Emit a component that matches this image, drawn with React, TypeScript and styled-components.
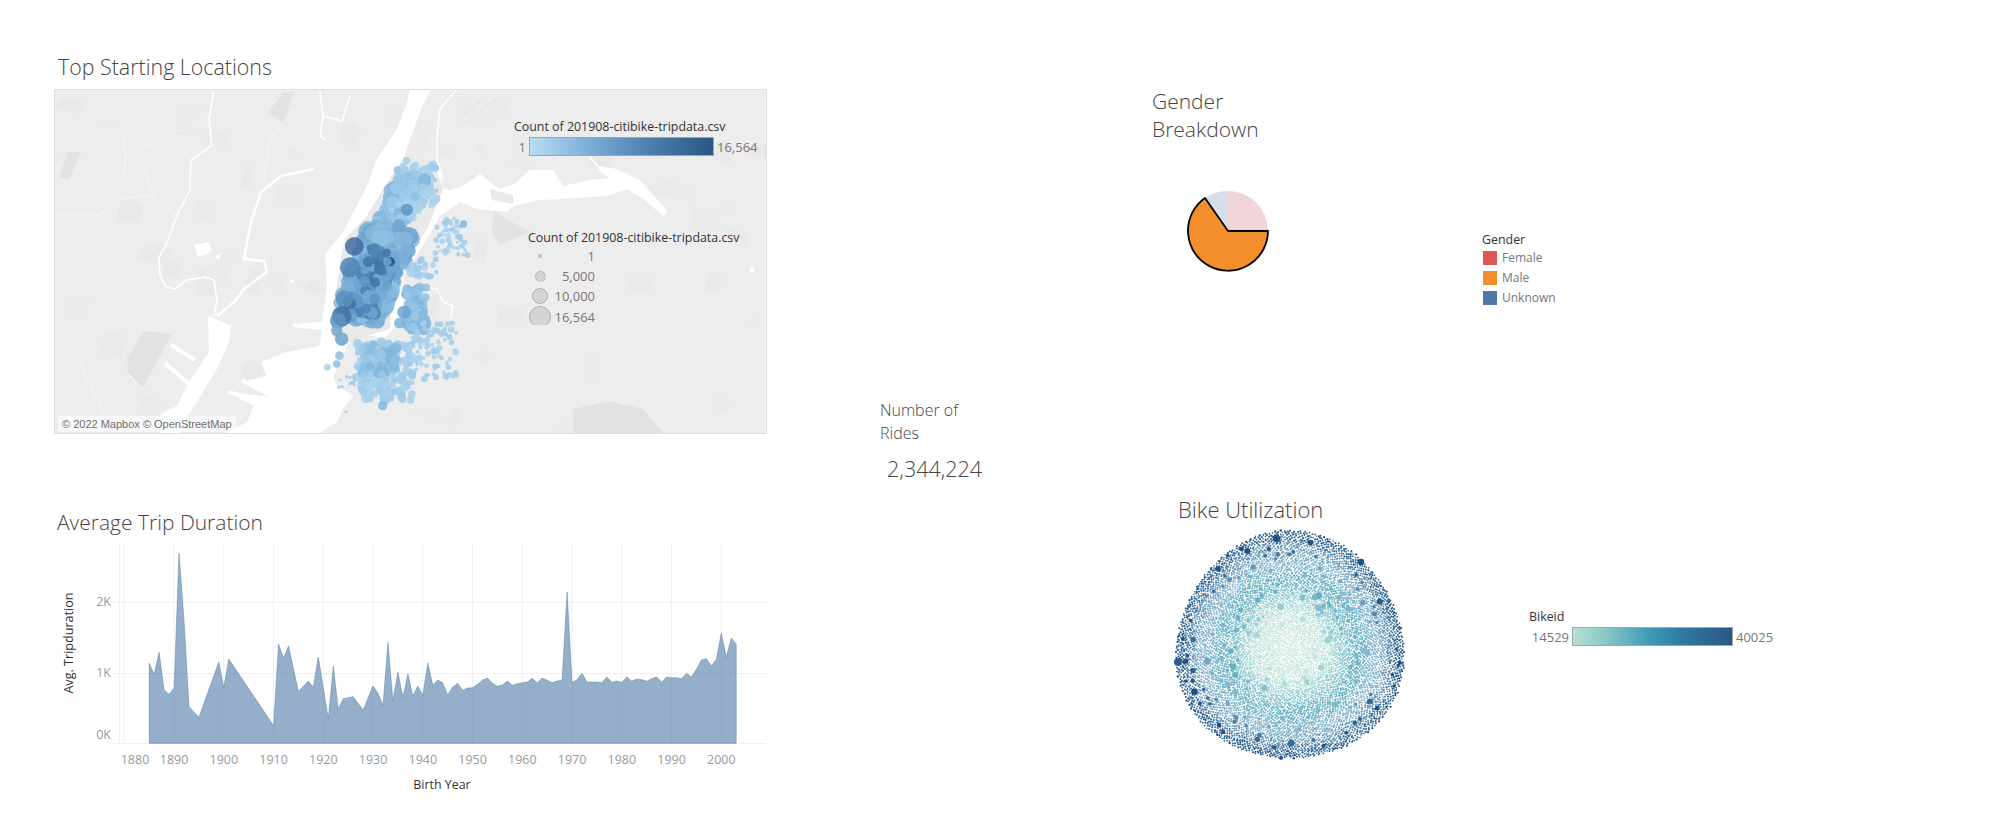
import React from 'react';
import styled, {createGlobalStyle} from 'styled-components';

const GlobalStyle = createGlobalStyle`
  html, body { margin: 0; padding: 0; background: white; }
  body { font-family: "Open Sans", "Liberation Sans", sans-serif; }
`;

const Page = styled.div`
  width: 2006px; height: 823px; display: flex; padding-left: 54px;
  box-sizing: border-box; overflow: hidden; background: white;
`;
const LeftColumn = styled.div`
  width: 713px; flex: none; padding-top: 56px;
`;
const MiddleColumn = styled.div`
  width: 272px; flex: none; margin-left: 113px; padding-top: 399px;
`;
const RightColumn = styled.div`
  flex: 1; padding-top: 87px;
`;
const Title = styled.h2<{$indent?: number; $size?: number}>`
  margin: 0 0 0 ${p => p.$indent ?? 0}px;
  font-size: ${p => p.$size ?? 21}px; line-height: 22px; font-weight: 300; color: #444;
  white-space: nowrap;
`;
const MapTitle = styled(Title)`
  margin-bottom: 11px;
`;
const TripTitle = styled(Title)`
  margin-top: 77px;
`;
const MapBox = styled.div`
  position: relative; width: 713px; height: 345px; box-sizing: border-box;
  border: 1px solid #dedede; background: #ededed; overflow: hidden;
  svg { display: block; }
`;
const Attribution = styled.div`
  position: absolute; left: 3px; bottom: 1px; height: 16px; padding: 0 4px;
  font: 11px/16px "Liberation Sans", Arial, sans-serif; color: #707070;
  background: rgba(255, 255, 255, .55); white-space: nowrap;
`;
const LegendTitle = styled.div`
  font-size: 12.4px; line-height: 16px; font-weight: 400; color: #333; white-space: nowrap;
`;
const LegendValue = styled.span<{$size?: number}>`
  font-size: ${p => p.$size ?? 13}px; line-height: 18px; color: #777; white-space: nowrap;
`;
const ColorLegend = styled.div`
  position: absolute; left: 459px; top: 29px;
`;
const RampRow = styled.div<{$label: number}>`
  display: grid; grid-template-columns: ${p => p.$label}px auto auto; column-gap: 3px;
  align-items: center; margin-top: 2px; text-align: right;
`;
const RampBar = styled.div<{$w: number; $ramp: string}>`
  width: ${p => p.$w}px; height: 19px; box-sizing: border-box;
  border: 1px solid #a8a59c; background: linear-gradient(to right, ${p => p.$ramp});
`;
const SizeLegend = styled.div`
  position: absolute; left: 473px; top: 140px;
`;
const SizeRow = styled.div`
  display: grid; grid-template-columns: 24px 43px; height: 20px; align-items: center;
  justify-items: center; text-align: right;
  span:last-child { justify-self: end; }
`;
const SizeDot = styled.i<{$r: number; $cut?: number}>`
  display: block; width: ${p => p.$r * 2}px; height: ${p => p.$r * 2}px; border-radius: 50%;
  box-sizing: border-box; background: #d4d4d4; border: 1.5px solid #b0b0b0;
  clip-path: inset(0 0 ${p => p.$cut ?? 0}px 0);
`;
const ChartWrap = styled.div`
  svg { display: block; }
  text { font-family: "Open Sans", sans-serif; }
`;
const RidesTitle = styled.div`
  font-size: 16px; line-height: 23px; font-weight: 300; color: #444;
`;
const RidesValue = styled.div`
  margin: 10px 0 0 7px; font-size: 21.5px; line-height: 28px; font-weight: 300; color: #444;
`;
const GenderSection = styled.section`
  display: flex; height: 218px;
`;
const GenderBlock = styled.div`
  width: 330px; flex: none;
  svg { display: block; margin: 46px 0 0 34px; }
`;
const GenderTitle = styled.h2`
  margin: 0; font-size: 21px; line-height: 28px; font-weight: 300; color: #444;
`;
const GenderLegend = styled.div`
  margin-top: 145px;
`;
const GenderRow = styled.div`
  display: flex; align-items: center; gap: 5px; height: 20px; margin-left: 1px;
`;
const Swatch = styled.i<{$color: string}>`
  display: block; width: 14px; height: 14px; background: ${p => p.$color};
`;
const BikeSection = styled.section`
  margin: 193px 0 0 26px;
`;
const BikeRow = styled.div`
  display: flex; margin: 7px 0 0 -8px;
  svg { display: block; flex: none; }
`;
const BikeLegend = styled.div`
  margin: 82px 0 0 119px;
`;

// small seeded random so the bubbles stay put between runs
function makeRng(seed: number) {
    let s = seed;
    return () => {
        s = (s * 16807) % 2147483647;
        return (s - 1) / 2147483646;
    };
}

type Bubble = { x: number, y: number, r: number, c: string };

// coords below are in the zoomed crop units: page = 300 + x/3, 89 + y/3
const z = (x: number, y: number, r: number, c: string): Bubble => ({x: 300 + x / 3, y: 89 + y / 3, r: r / 3, c});

function scatterLine(rng: () => number, n: number, a: number[], b: number[], w: number, rMin: number, rMax: number, cols: string[]) {
    const out: Bubble[] = [];
    for (let i = 0; i < n; i++) {
        const t = rng();
        const s = (rng() * 2 - 1) * w;
        const x = a[0] + (b[0] - a[0]) * t + s;
        const y = a[1] + (b[1] - a[1]) * t + s * .3;
        out.push(z(x, y, rMin + (rMax - rMin) * rng(), cols[Math.floor(rng() * cols.length)]));
    }
    return out;
}

function scatterBox(rng: () => number, n: number, x0: number, y0: number, x1: number, y1: number, rMin: number, rMax: number, cols: string[]) {
    const out: Bubble[] = [];
    for (let i = 0; i < n; i++) {
        out.push(z(x0 + (x1 - x0) * rng(), y0 + (y1 - y0) * rng(), rMin + (rMax - rMin) * rng(), cols[Math.floor(rng() * cols.length)]));
    }
    return out;
}

const LIGHT = ['#a9d2ec', '#9fcbe9', '#a4cfeb'];
const SOFT = ['#8fc0e3', '#9ac8e7', '#84b7dd'];
const MID = ['#7bafd7', '#86b8dc', '#6fa5d0', '#8fc0e3'];
const DEEP = ['#5d94c3', '#6fa5d0', '#4a80b3', '#78acd5', '#3f74a8'];

function buildBubbles() {
    const rng = makeRng(4242);
    return [
        ...scatterBox(rng, 34, 490, 18, 620, 72, 2, 2.5, ['#cfe4f2']),
        ...scatterBox(rng, 60, 310, 225, 420, 350, 6, 13, LIGHT),
        ...scatterLine(rng, 90, [265, 420], [335, 255], 42, 12, 22, SOFT),
        ...scatterLine(rng, 40, [300, 380], [370, 290], 35, 8, 16, LIGHT),
        ...scatterBox(rng, 60, 405, 385, 505, 500, 4, 9, LIGHT),
        ...scatterBox(rng, 36, 318, 510, 410, 568, 6, 11, LIGHT),
        ...scatterBox(rng, 70, 318, 595, 380, 725, 10, 17, SOFT),
        ...scatterBox(rng, 190, 170, 760, 340, 935, 7, 14, LIGHT),
        ...scatterBox(rng, 60, 185, 760, 290, 860, 9, 16, SOFT),
        ...scatterBox(rng, 90, 340, 700, 470, 870, 5, 10, LIGHT),
        ...scatterBox(rng, 16, 115, 860, 165, 900, 3, 6, LIGHT),
        ...scatterLine(rng, 340, [170, 690], [275, 420], 66, 14, 28, MID),
        ...scatterLine(rng, 110, [185, 670], [250, 480], 42, 12, 24, DEEP),
        z(163, 472, 28, '#3f6f9f'), z(150, 535, 30, '#4e84b4'), z(133, 630, 26, '#5a8fbd'),
        z(150, 680, 22, '#6b9ec9'), z(145, 590, 17, '#7fb0d6'), z(125, 682, 30, '#3f72a3'),
        z(114, 696, 24, '#5d94c0'), z(110, 724, 17, '#74a6cf'), z(125, 750, 20, '#6fa2cd'),
        z(321, 362, 18, '#5b95c4'), z(297, 410, 20, '#6fa5d0'), z(270, 518, 14, '#1f4e7f'),
        z(262, 518, 13, '#6fa5d0'), z(312, 670, 20, '#6fa5d0'), z(298, 702, 16, '#7bafd7'),
        z(248, 950, 14, '#84b8dd'), z(118, 800, 13, '#8fc0e3'), z(110, 825, 11, '#8fc0e3'),
        z(82, 835, 10, '#a4cfeb'), z(138, 968, 5, '#a9d2ec'), z(491, 405, 11, '#84b7dd'),
        z(205, 518, 16, '#3f74a8'), z(225, 580, 15, '#3f74a8'), z(198, 660, 15, '#4f86b8'),
        z(345, 322, 14, '#8fc0e3'), z(320, 215, 11, '#a4cfeb'),
    ];
}

const BUBBLES = buildBubbles();

// land patches a bit darker than the base land colour
function buildPatches() {
    const rng = makeRng(99);
    const out: { d: string, c: string }[] = [];
    for (let i = 0; i < 70; i++) {
        const x = 60 + rng() * 700;
        const y = 92 + rng() * 335;
        const w = 6 + rng() * 22;
        const h = 6 + rng() * 20;
        const sk = rng() * 8;
        out.push({
            d: `M${x} ${y}L${x + w * .6} ${y - sk * .4}L${x + w} ${y + sk}L${x + w - sk} ${y + h}L${x - sk} ${y + h - sk}Z`,
            c: i % 3 === 0 ? '#e9e9e9' : '#ebebeb'
        });
    }
    return out;
}

const PATCHES = buildPatches();

const WATER = 'M410 89L407 102L397 129L377 159L367 186L343 232L325 254L327 286L322 322L300 323L300 328L322 328L320 345L314 347L287 352L261 362L267 376L241 382L274 397L227 392L254 406L247 422L225 433L320 433L337 422L343 409L353 396L337 386L333 376L352 336L360 334L385 338L392 330L400 322L405 300L403 274L423 246L440 216L460 202L477 209L507 212L513 206L540 200L563 199L607 196L627 189L645 200L663 216L668 212L640 180L617 169L597 166L600 172L610 178L590 180L563 186L553 170L530 170L516 183L500 189L480 174L463 186L450 190L443 189L440 172L433 161L407 157L403 159L420 112L431 89Z';
const MANHATTAN = 'M407 157L433 161L443 189L427 229L400 269L392 296L390 329L355 339L342 347L332 336L333 316L340 262L345 239L367 216L383 189L403 159Z';
const BAY = 'M208 316L231 326L229 342L217 369L197 402L184 422L180 433L160 433L161 414L177 406L189 382L209 352Z';

const RIVERS = [
    'M214 91L209 118L211 140L212 145L199 155L191 160L190 185L190 190L177 215L177 216L166 245L159 257L160 275L166 287L175 289L187 280L205 277L214 280L217 300L214 316',
    'M217 316L234 302L244 289L267 272L264 261L244 259L251 222L261 192L281 176L314 169',
    'M320 92L323 116L342 121L350 96',
    'M323 116L320 136L325 139',
    'M457 89L440 109L437 139L437 159L443 179',
    'M423 286L437 289L443 302L453 306L450 319',
    'M597 166L585 150L570 140',
];
const THIN = [
    'M58 215L100 215L118 195L122 200L140 195L155 197L176 216',
    'M155 197L140 160L124 175L126 155L122 130L150 146L165 135L185 130L197 135',
    'M56 340L70 355L80 362L92 390L100 405L104 420',
    'M300 105L285 120L270 140L266 165L264 180L278 195',
];
const PIERS = [
    'M171 345L195 360', 'M165 363L190 385', 'M228 392L274 405', 'M242 380L275 398',
    'M293 325L322 328',
];

const GRADE_YEARS: [number, number][] = [
    [1885, 400], [1886, 433], [1887, 367], [1888, 480], [1889, 493], [1890, 474], [1891, 69], [1892, 270], [1893, 530],
    [1895, 562], [1899, 396], [1900, 472], [1901, 387], [1910, 587], [1911, 342], [1912, 385], [1913, 348], [1915, 484],
    [1917, 453], [1918, 472], [1919, 381], [1921, 566], [1922, 408], [1923, 536], [1924, 506], [1926, 500], [1928, 540],
    [1930, 468], [1931, 490], [1932, 526], [1933, 337], [1934, 512], [1935, 426], [1936, 502], [1937, 432], [1938, 498],
    [1939, 468], [1940, 496], [1941, 399], [1942, 466], [1943, 450], [1944, 458], [1945, 495], [1946, 472], [1947, 460],
    [1948, 481], [1949, 474], [1950, 473], [1951, 463], [1952, 450], [1953, 444], [1954, 460], [1955, 469], [1956, 465],
    [1957, 453], [1958, 466], [1959, 461], [1960, 458], [1961, 456], [1962, 445], [1963, 459], [1964, 444], [1965, 451],
    [1966, 458], [1967, 453], [1968, 450], [1969, 186], [1970, 457], [1971, 449], [1972, 430], [1973, 456], [1974, 456],
    [1975, 456], [1976, 458], [1977, 441], [1978, 457], [1979, 453], [1980, 457], [1981, 441], [1982, 454], [1983, 447],
    [1984, 449], [1985, 454], [1986, 446], [1987, 441], [1988, 456], [1989, 441], [1990, 443], [1991, 443], [1992, 446],
    [1993, 430], [1994, 441], [1995, 418], [1996, 390], [1997, 386], [1998, 408], [1999, 388], [2000, 310], [2001, 382],
    [2002, 325], [2003, 342],
];
const yearX = (y: number) => 124.3 + 4.975 * (y - 1880);
const zoomY = (p: number) => 530 + p / 3;
const AREA = `M${yearX(1885)} 743L` + GRADE_YEARS.map(([y, v]) => `${yearX(y).toFixed(1)} ${zoomY(v).toFixed(1)}`).join('L') + `L${yearX(2003)} 743Z`;
const DECADES = [1880, 1890, 1900, 1910, 1920, 1930, 1940, 1950, 1960, 1970, 1980, 1990, 2000];

function mix(a: number[], b: number[], t: number) {
    return `rgb(${a.map((v, i) => Math.round(v + (b[i] - v) * t)).join(',')})`;
}
const STOPS: [number, number[]][] = [
    [0, [214, 236, 229]], [.3, [200, 230, 222]], [.45, [150, 205, 210]], [.6, [100, 175, 195]],
    [.75, [140, 185, 208]], [.85, [105, 155, 188]], [.93, [55, 110, 155]], [1, [30, 80, 130]],
];
function rampColor(t: number) {
    for (let i = 1; i < STOPS.length; i++) {
        if (t <= STOPS[i][0]) {
            const [t0, c0] = STOPS[i - 1];
            const [t1, c1] = STOPS[i];
            return mix(c0, c1, (t - t0) / (t1 - t0));
        }
    }
    return mix(STOPS[7][1], STOPS[7][1], 0);
}

// sunflower spiral, then a few larger bubbles thrown in
function buildBikeDots() {
    const rng = makeRng(777);
    const dots: { x: number, y: number, r: number, c: string }[] = [];
    const N = 7000;
    for (let i = 0; i < N; i++) {
        const t = Math.sqrt((i + .5) / N);
        const a = i * 2.39996;
        const edge = 1 + .025 * Math.sin(a * 3) * t;
        const R = 114 * t * edge;
        dots.push({
            x: 120 + R * Math.cos(a) + (rng() - .5) * 1.2,
            y: 120 + R * Math.sin(a) + (rng() - .5) * 1.2,
            r: .95 + rng() * .45 - t * .2,
            c: rampColor(Math.min(1, t + (rng() - .5) * .08)),
        });
    }
    for (let i = 0; i < 170; i++) {
        const t = Math.sqrt(.03 + rng() * .95);
        const a = rng() * Math.PI * 2;
        dots.push({
            x: 120 + 113 * t * Math.cos(a),
            y: 120 + 113 * t * Math.sin(a),
            r: 1.6 + rng() * rng() * 2.2,
            c: rampColor(Math.min(1, t + .08)),
        });
    }
    dots.push({x: 8, y: 135, r: 4, c: '#2a5f92'});
    return dots;
}
const BIKE_DOTS = buildBikeDots();

function PieSlice() {
    const cx = 42, cy = 42, r = 40;
    const end = {x: 42 - 23, y: 42 - 33};
    return (
        <svg width="84" height="84" viewBox="0 0 84 84">
            <path d={`M${cx} ${cy}L${cx} ${cy - r}A${r} ${r} 0 0 1 ${cx + r} ${cy}Z`} fill="#f1d5d8"/>
            <path d={`M${cx} ${cy}L${end.x} ${end.y}A${r} ${r} 0 0 1 ${cx} ${cy - r}Z`} fill="#d6dfe8"/>
            <path d={`M${cx} ${cy}L${cx + r} ${cy}A${r} ${r} 0 1 1 ${end.x} ${end.y}Z`} fill="#f28e2b" stroke="#000" strokeWidth="1.8" strokeLinejoin="round"/>
        </svg>
    );
}

function App() {
    return (
        <Page>
            <GlobalStyle/>
            <LeftColumn>
                <MapTitle $indent={4} $size={21.4}>Top Starting Locations</MapTitle>
                <MapBox>
                    <svg width="711" height="343" viewBox="55 90 711 343">
                        <rect x="55" y="90" width="711" height="343" fill="#ededed"/>
                        {PATCHES.map((p, i) => <path key={i} d={p.d} fill={p.c}/>)}
                        <path d="M144 331L172 334L142 389L127 372L129 356Z" fill="#e2e2e2"/>
                        <path d="M127 372L142 389" stroke="white" strokeWidth="1" fill="none"/>
                        <path d="M68 152L81 152L69 179L59 177Z" fill="#e3e3e3"/>
                        <path d="M284 92L294 91L284 124L268 112Z" fill="#e3e3e3"/>
                        <path d="M573 409L610 401L643 409L663 433L573 433Z" fill="#e2e2e2"/>
                        <path d="M494 210L512 222L530 232L500 245L492 232Z" fill="#e3e3e3"/>
                        <path d={WATER} fill="white"/>
                        <path d={BAY} fill="white"/>
                        <path d={MANHATTAN} fill="#e9e9e9"/>
                        <path d="M490 189L513 195L513 204L492 200Z" fill="#e9e9e9"/>
                        {RIVERS.map((d, i) => <path key={i} d={d} fill="none" stroke="white" strokeWidth={i === 0 ? 1.6 : i === 1 ? 2.4 : 1.5} strokeLinejoin="round"/>)}
                        {THIN.map((d, i) => <path key={i} d={d} fill="none" stroke="#f6f6f6" strokeWidth="1"/>)}
                        {PIERS.map((d, i) => <path key={i} d={d} fill="none" stroke="white" strokeWidth="4"/>)}
                        <path d="M194 245L208 242L212 250L205 255L198 256Z" fill="white"/>
                        <path d="M215 256L222 253L218 260Z" fill="white"/>
                        <path d="M290 280L294 279L294 283L290 283Z" fill="white"/>
                        <path d="M750 268L754 268L754 272L750 272Z" fill="white"/>
                        {BUBBLES.map((b, i) => <circle key={i} cx={b.x} cy={b.y} r={b.r} fill={b.c} fillOpacity=".85"/>)}
                    </svg>
                    <ColorLegend>
                        <LegendTitle>Count of 201908-citibike-tripdata.csv</LegendTitle>
                        <RampRow $label={12}>
                            <LegendValue>1</LegendValue>
                            <RampBar $w={185} $ramp="#b9ddf1, #7fb2da 30%, #4d7fae 65%, #2a5783"/>
                            <LegendValue>16,564</LegendValue>
                        </RampRow>
                    </ColorLegend>
                    <SizeLegend>
                        <LegendTitle>Count of 201908-citibike-tripdata.csv</LegendTitle>
                        <SizeRow><SizeDot $r={2}/><LegendValue>1</LegendValue></SizeRow>
                        <SizeRow><SizeDot $r={5.5}/><LegendValue>5,000</LegendValue></SizeRow>
                        <SizeRow><SizeDot $r={8}/><LegendValue>10,000</LegendValue></SizeRow>
                        <SizeRow><SizeDot $r={11} $cut={3}/><LegendValue>16,564</LegendValue></SizeRow>
                    </SizeLegend>
                    <Attribution>© 2022 Mapbox © OpenStreetMap</Attribution>
                </MapBox>
                <TripTitle $indent={3}>Average Trip Duration</TripTitle>
                <ChartWrap>
                    <svg width="713" height="267" viewBox="54 533 713 267">
                        {DECADES.map(y => <line key={y} x1={yearX(y)} x2={yearX(y)} y1="544" y2="745" stroke="#f0f0f0"/>)}
                        <line x1="119.5" x2="119.5" y1="544" y2="745" stroke="#f0f0f0"/>
                        <line x1="113" x2="766" y1="602" y2="602" stroke="#f0f0f0"/>
                        <line x1="113" x2="766" y1="673.5" y2="673.5" stroke="#f0f0f0"/>
                        <line x1="113" x2="766" y1="743.5" y2="743.5" stroke="#f0f0f0"/>
                        <path d={AREA} fill="#4e79a7" fillOpacity=".6" stroke="#4e79a7" strokeOpacity=".45" strokeWidth="1"/>
                        <line x1={yearX(1885)} x2={yearX(2003)} y1="743" y2="743" stroke="#7a9bc2"/>
                        {[['2K', 602], ['1K', 673], ['0K', 735]].map(([t, y]) => (
                            <text key={t as string} x="111" y={(y as number) + 4} textAnchor="end" fontSize="12.5" fill="#999">{t}</text>
                        ))}
                        {DECADES.map(y => (
                            <text key={y} x={y === 1880 ? 135 : yearX(y)} y="764" textAnchor="middle" fontSize="12.5" fill="#999">{y}</text>
                        ))}
                        <text x="442" y="789" textAnchor="middle" fontSize="12.4" fill="#333">Birth Year</text>
                        <text transform="translate(73 643) rotate(-90)" textAnchor="middle" fontSize="12.6" fill="#333">Avg. Tripduration</text>
                    </svg>
                </ChartWrap>
            </LeftColumn>
            <MiddleColumn>
                <RidesTitle>Number of<br/>Rides</RidesTitle>
                <RidesValue>2,344,224</RidesValue>
            </MiddleColumn>
            <RightColumn>
                <GenderSection>
                    <GenderBlock>
                        <GenderTitle>Gender<br/>Breakdown</GenderTitle>
                        <PieSlice/>
                    </GenderBlock>
                    <GenderLegend>
                        <LegendTitle>Gender</LegendTitle>
                        <GenderRow><Swatch $color="#e15759"/><LegendValue $size={12}>Female</LegendValue></GenderRow>
                        <GenderRow><Swatch $color="#f28e2b"/><LegendValue $size={12}>Male</LegendValue></GenderRow>
                        <GenderRow><Swatch $color="#4e79a7"/><LegendValue $size={12}>Unknown</LegendValue></GenderRow>
                    </GenderLegend>
                </GenderSection>
                <BikeSection>
                    <Title $size={22}>Bike Utilization</Title>
                    <BikeRow>
                        <svg width="240" height="240" viewBox="0 0 240 240">
                            {BIKE_DOTS.map((d, i) => <circle key={i} cx={d.x} cy={d.y} r={d.r} fill={d.c}/>)}
                        </svg>
                        <BikeLegend>
                            <LegendTitle>Bikeid</LegendTitle>
                            <RampRow $label={40}>
                                <LegendValue>14529</LegendValue>
                                <RampBar $w={161} $ramp="#b7e0d5, #84c6c6 22%, #3f9bb6 48%, #2f7ba0 68%, #2a5783"/>
                                <LegendValue>40025</LegendValue>
                            </RampRow>
                        </BikeLegend>
                    </BikeRow>
                </BikeSection>
            </RightColumn>
        </Page>
    );
}

export default App;
